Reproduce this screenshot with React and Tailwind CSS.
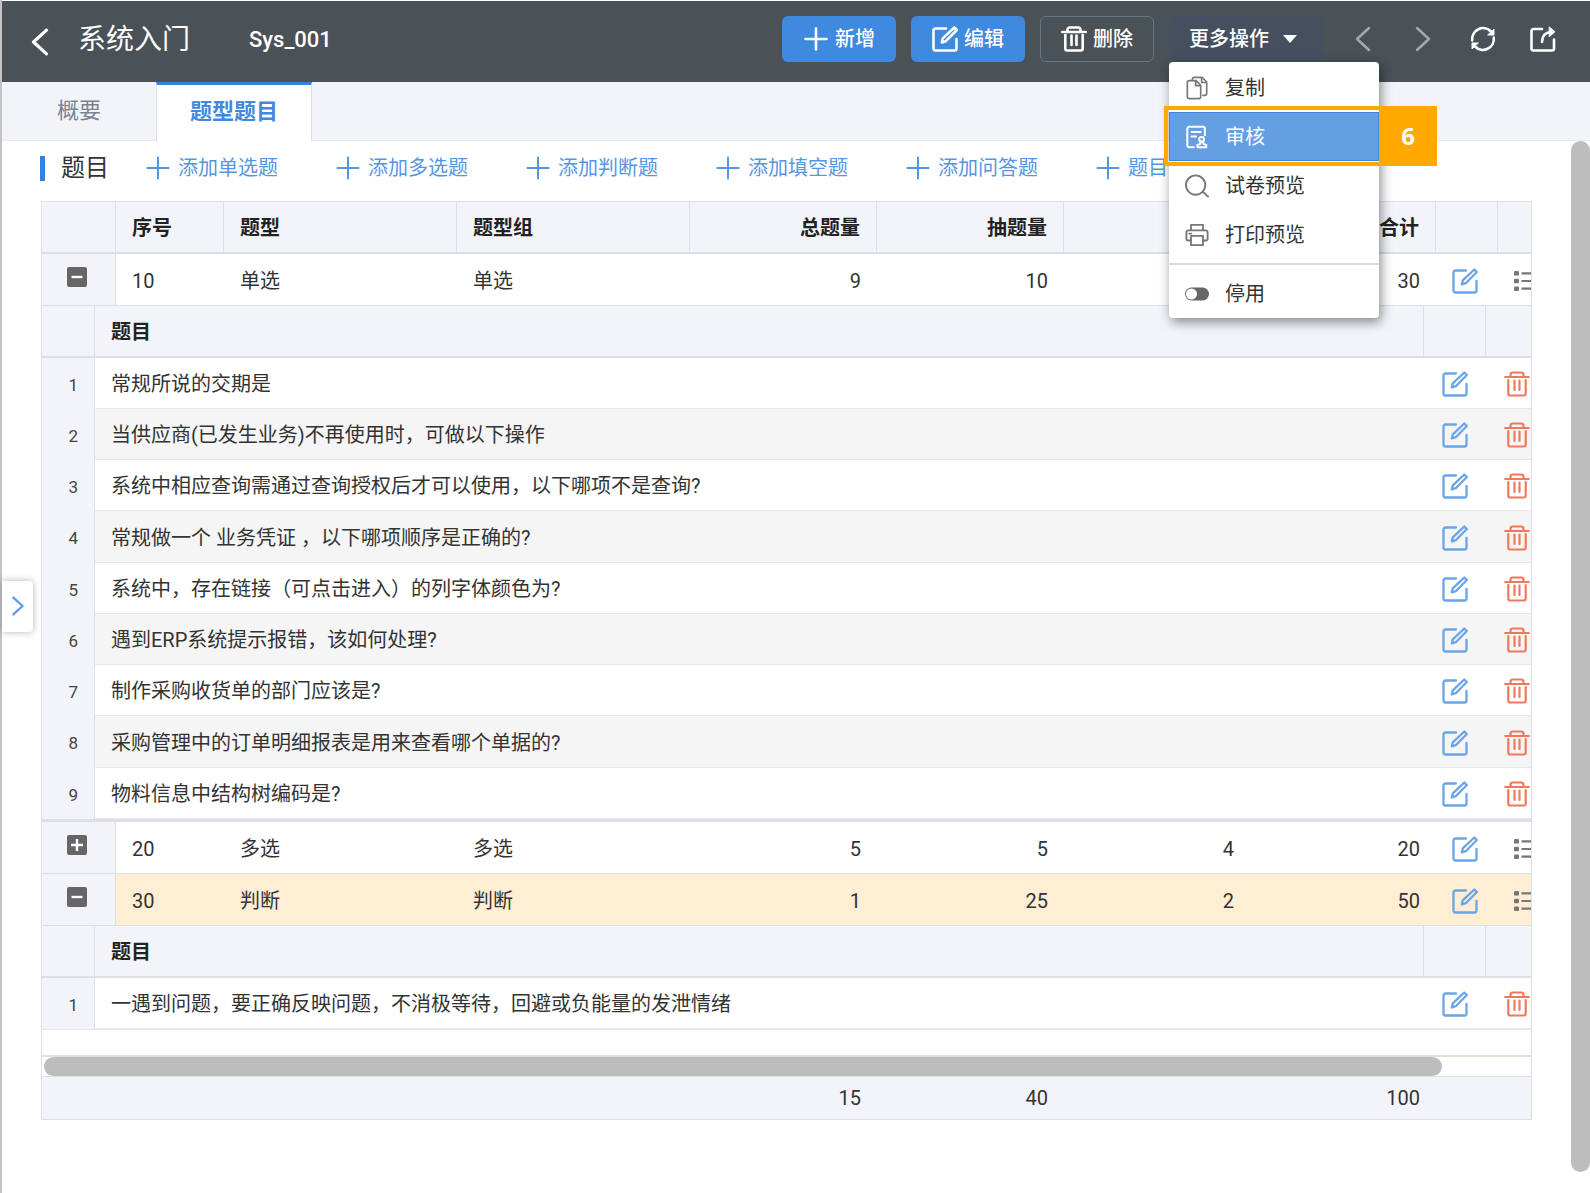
import React, { useState } from "react";

const iconProps = {
  fill: "none",
  stroke: "currentColor",
  strokeLinecap: "round",
  strokeLinejoin: "round",
  "aria-hidden": true,
};

function PlusIcon({ className, width = 2 }) {
  return (
    <svg viewBox="0 0 26 26" className={className} {...iconProps} strokeWidth={width}>
      <path d="M13 2.5v21M2.5 13h21" />
    </svg>
  );
}

function EditIcon({ className, width = 2.3 }) {
  return (
    <svg viewBox="0 0 26 26" className={className} {...iconProps} strokeWidth={width}>
      <path d="M14 2.5H3.5a2 2 0 0 0-2 2v18a2 2 0 0 0 2 2h19a2 2 0 0 0 2-2V13" />
      <path d="M22.3 1.5l2.5 2.5-11 11.2-4 1.2 1-4z" />
    </svg>
  );
}

function TrashIcon({ className, width = 2.2 }) {
  return (
    <svg viewBox="0 0 26 26" className={className} {...iconProps} strokeWidth={width}>
      <path d="M1.2 6h23.6M6.5 5.5V3.7a2.2 2.2 0 0 1 2.2-2.2h8.6a2.2 2.2 0 0 1 2.2 2.2v1.8" />
      <path d="M4.3 9v13.5a2 2 0 0 0 2 2h13.4a2 2 0 0 0 2-2V9M10.5 9.5v9.5M15.5 9.5v9.5" />
    </svg>
  );
}

function ChevronIcon({ className, right, width = 2.5 }) {
  return (
    <svg viewBox="0 0 26 26" className={className} {...iconProps} strokeWidth={width}>
      <path d={right ? "M7 2l12 11L7 24" : "M19 2L7 13l12 11"} />
    </svg>
  );
}

function RefreshIcon({ className }) {
  return (
    <svg viewBox="0 0 26 26" className={className} {...iconProps} strokeWidth="2.6">
      <path d="M2.2 14.5A11 11 0 0 1 21 5.500M23.800 11.500A11 11 0 0 1 5 20.500" />
      <path d="M24 3.500v5.500h-6zM2 22.500V17h6z" fill="currentColor" strokeWidth="1" />
    </svg>
  );
}

function ShareIcon({ className }) {
  return (
    <svg viewBox="0 0 26 26" className={className} {...iconProps} strokeWidth="2.6">
      <path d="M12 3H3.5a2 2 0 0 0-2 2v17.500a2 2 0 0 0 2 2h18.500a2 2 0 0 0 2-2V13.500" />
      <path d="M12 16c0-6 3.500-9.500 9-10" />
      <path d="M19.500 1.200l5.500 4.600-5.500 4.700z" fill="currentColor" strokeWidth="1" />
    </svg>
  );
}

function ListIcon({ className }) {
  return (
    <svg viewBox="0 0 26 26" className={className} fill="currentColor" aria-hidden>
      <rect x="0" y="3" width="5" height="4.600" rx="1.200" />
      <rect x="0" y="10.700" width="5" height="4.600" rx="1.200" />
      <rect x="0" y="18.400" width="5" height="4.600" rx="1.200" />
      <path d="M7.500 4.200H25v2.200H7.500zM7.500 11.900H25v2.200H7.500zM7.500 19.600H25v2.200H7.500z" />
    </svg>
  );
}

function CopyIcon({ className }) {
  return (
    <svg viewBox="0 0 24 26" className={className} {...iconProps} strokeWidth="1.8">
      <path d="M7 5V3.500a2 2 0 0 1 2-2h8.500l5 5V19a2 2 0 0 1-2 2h-2" />
      <path d="M17 2v5h5M3.500 5H11l5 5v12.500a2 2 0 0 1-2 2H3.500a2 2 0 0 1-2-2V7a2 2 0 0 1 2-2zM10.500 5.500v5H15.500" />
    </svg>
  );
}

function AuditIcon({ className }) {
  return (
    <svg viewBox="0 0 24 26" className={className} {...iconProps} strokeWidth="2.2">
      <path d="M8.500 24H3.500a2 2 0 0 1-2-2V4a2 2 0 0 1 2-2h15a2 2 0 0 1 2 2v7M6 7.500h10M6 12.500h5" />
      <circle cx="17" cy="15.500" r="2.600" />
      <path d="M16 18l-.5 2.500-3 1V24h9.500v-2.500l-3-1L18.500 18" />
    </svg>
  );
}

function SearchIcon({ className }) {
  return (
    <svg viewBox="0 0 26 26" className={className} {...iconProps} strokeWidth="2">
      <circle cx="11.500" cy="12" r="10.500" />
      <path d="M19.500 19.500l5.500 5" />
    </svg>
  );
}

function PrinterIcon({ className }) {
  return (
    <svg viewBox="0 0 26 26" className={className} {...iconProps} strokeWidth="2">
      <path d="M6.500 8V2h13v6M6.500 19H3.500a2 2 0 0 1-2-2v-7a2 2 0 0 1 2-2h19a2 2 0 0 1 2 2v7a2 2 0 0 1-2 2h-3M6.500 14h13v10h-13zM4.500 11.500h2.500" />
    </svg>
  );
}

function ToggleIcon({ className }) {
  return (
    <svg viewBox="0 0 26 26" className={className} aria-hidden>
      <rect x="0" y="6" width="26" height="14" rx="7" fill="#666" />
      <circle cx="7" cy="13" r="6" fill="#fff" />
    </svg>
  );
}

const tools = ["添加单选题", "添加多选题", "添加判断题", "添加填空题", "添加问答题", "题目选择"];

const groups = [
  {
    no: 10,
    type: "单选",
    total: 9,
    drawn: 10,
    sum: 30,
    open: true,
    questions: [
      "常规所说的交期是",
      "当供应商(已发生业务)不再使用时，可做以下操作",
      "系统中相应查询需通过查询授权后才可以使用，以下哪项不是查询?",
      "常规做一个 业务凭证 ，以下哪项顺序是正确的?",
      "系统中，存在链接（可点击进入）的列字体颜色为?",
      "遇到ERP系统提示报错，该如何处理?",
      "制作采购收货单的部门应该是?",
      "采购管理中的订单明细报表是用来查看哪个单据的?",
      "物料信息中结构树编码是?",
    ],
  },
  { no: 20, type: "多选", total: 5, drawn: 5, score: 4, sum: 20, open: false, questions: [] },
  {
    no: 30,
    type: "判断",
    total: 1,
    drawn: 25,
    score: 2,
    sum: 50,
    open: true,
    selected: true,
    questions: ["一遇到问题，要正确反映问题，不消极等待，回避或负能量的发泄情绪"],
  },
];

function GridColumns() {
  return (
    <colgroup>
      <col className="w-[74px]" />
      <col className="w-[108px]" />
      <col className="w-[233px]" />
      <col className="w-[233px]" />
      <col className="w-[187px]" />
      <col className="w-[187px]" />
      <col className="w-[186px]" />
      <col className="w-[186px]" />
      <col className="w-[62px]" />
      <col className="w-[62px]" />
      <col className="w-[62px]" />
    </colgroup>
  );
}

function QuestionTable({ questions }) {
  return (
    <table className="w-full table-fixed border-separate border-spacing-0 text-left">
      <colgroup>
        <col className="w-[53px]" />
        <col />
        <col className="w-[62px]" />
        <col className="w-[136px]" />
      </colgroup>
      <thead>
        <tr className="h-[52px] bg-[#f2f4f9]">
          <th className="border-r border-b-2 border-[#dcdfe8]" />
          <th className="border-r border-b-2 border-[#dcdfe8] px-4 pt-0.5 font-bold text-[#222]">题目</th>
          <th className="border-r border-b-2 border-[#dcdfe8]" />
          <th className="border-b-2 border-[#dcdfe8]" />
        </tr>
      </thead>
      <tbody>
        {questions.map((q, i) => (
          <tr key={q} className="h-[51px] bg-white even:bg-[#f5f5f5] nth-[4n]:h-[52px]">
            <td className="border-r border-[#dcdfe8] bg-[#f2f4f9] pt-0.5 pr-4 text-right text-[17px] text-[#444]">
              {i + 1}
            </td>
            <td className="border-b border-[#e8e8e8] px-4 pt-0.5 whitespace-nowrap">{q}</td>
            <td className="border-b border-[#e8e8e8] pt-0.5">
              <button aria-label="编辑题目" className="mx-auto block text-[#6aa5e8]">
                <EditIcon className="size-[26px]" />
              </button>
            </td>
            <td className="border-b border-[#e8e8e8] pt-0.5 pl-[18px]">
              <button aria-label="删除题目" className="block text-[#f0795a]">
                <TrashIcon className="size-[26px]" />
              </button>
            </td>
          </tr>
        ))}
      </tbody>
    </table>
  );
}

function GroupRows({ group, onToggle }) {
  const cell = "border-b border-[#dcdfe8] px-4 pt-0.5";
  return (
    <>
      <tr className={`h-[52px] ${group.selected ? "bg-[#ffeed3]" : "bg-white"}`}>
        <td className="border-r border-b border-[#dcdfe8] bg-[#f2f4f9] pr-1 pb-1.5">
          <button
            aria-label={group.open ? "收起" : "展开"}
            onClick={onToggle}
            className="mx-auto block size-5 rounded-xs bg-[#666] text-white"
          >
            <svg viewBox="0 0 20 20" className="size-5" {...iconProps} strokeWidth="2.4" strokeLinecap="butt">
              <path d={group.open ? "M4.500 10h11" : "M4 10h12M10 4v12"} />
            </svg>
          </button>
        </td>
        <td className={cell}>{group.no}</td>
        <td className={cell}>{group.type}</td>
        <td className={cell}>{group.type}</td>
        <td className={`${cell} text-right`}>{group.total}</td>
        <td className={`${cell} text-right`}>{group.drawn}</td>
        <td className={`${cell} text-right`}>{group.score}</td>
        <td className={`${cell} text-right`}>{group.sum}</td>
        <td className="border-b border-[#dcdfe8] pt-0.5 pr-1">
          <button aria-label="编辑" className="mx-auto block text-[#6aa5e8]">
            <EditIcon className="size-[26px]" />
          </button>
        </td>
        <td className={cell}>
          <button aria-label="明细" className="block text-[#777]">
            <ListIcon className="size-[26px]" />
          </button>
        </td>
        <td className={cell} />
      </tr>
      {group.open && (
        <tr>
          <td colSpan={11} className={group.selected ? "border-b border-[#e8e8e8]" : "border-b-3 border-[#dcdfe8]"}>
            <QuestionTable questions={group.questions} />
          </td>
        </tr>
      )}
    </>
  );
}

function MenuItem({ icon: Icon, label }) {
  return (
    <button role="menuitem" className="flex h-[49px] w-full items-center gap-4 px-4 text-[#333]">
      <Icon className="size-6 text-[#777]" />
      {label}
    </button>
  );
}

function MoreMenu() {
  return (
    <div
      role="menu"
      className="absolute top-full left-0 z-20 w-[210px] rounded-sm bg-white pt-px font-normal shadow-[2px_4px_12px_rgba(0,0,0,0.45)]"
    >
      <MenuItem icon={CopyIcon} label="复制" />
      <div className="relative">
        <button
          role="menuitem"
          className="flex h-[49px] w-full items-center gap-4 border border-[#3d87dc] bg-[#659fe3] px-[15px] text-white"
        >
          <AuditIcon className="size-6" />
          审核
        </button>
        {/* Step marker */}
        <div className="pointer-events-none absolute -top-1.5 right-0 -bottom-[5px] -left-[5px] border-4 border-r-0 border-[#ffa800]" />
        <div className="absolute -top-1.5 -bottom-[5px] left-full flex w-[58px] items-center justify-center bg-[#ffa800] font-['Open_Sans',sans-serif] text-2xl font-bold text-white">
          6
        </div>
      </div>
      <MenuItem icon={SearchIcon} label="试卷预览" />
      <MenuItem icon={PrinterIcon} label="打印预览" />
      <div className="mt-1 border-t-2 border-[#ddd] pt-1">
        <MenuItem icon={ToggleIcon} label="停用" />
      </div>
    </div>
  );
}

function Header() {
  const [menuOpen, setMenuOpen] = useState(true);
  const btn = "flex h-[46px] items-center justify-center rounded-md text-[20px] font-medium text-white";
  return (
    <header className="flex h-[82px] items-start border-t border-white bg-[#4a5157] pt-[15px] pr-[34px] pl-6 text-white">
      <div className="flex h-[46px] items-center pt-0.5">
        <button aria-label="返回">
          <ChevronIcon className="mt-1 size-7" width={3} />
        </button>
        <h1 className="ml-6 text-[28px] leading-none">系统入门</h1>
        <span className="ml-[59px] text-[22px] font-medium">Sys_001</span>
      </div>
      <div className="ml-auto flex items-center gap-[15px]">
        <button className={`${btn} w-[114px] gap-1.5 bg-[#3f89de]`}>
          <PlusIcon className="size-[26px]" width={2.6} />
          新增
        </button>
        <button className={`${btn} w-[114px] gap-1.5 bg-[#3f89de]`}>
          <EditIcon className="size-[26px]" width={2.6} />
          编辑
        </button>
        <button className={`${btn} w-[114px] gap-1.5 border border-[#66778a]`}>
          <TrashIcon className="size-[26px]" width={2.6} />
          删除
        </button>
        <div className="relative text-[20px]">
          <button
            aria-haspopup="menu"
            aria-expanded={menuOpen}
            onClick={() => setMenuOpen(!menuOpen)}
            className={`${btn} w-[154px] justify-start gap-3.5 bg-[#454f5f] pl-5`}
          >
            更多操作
            <svg viewBox="0 0 14 8" className="h-2 w-3.5" fill="currentColor" aria-hidden>
              <path d="M0 0h14L7 8z" />
            </svg>
          </button>
          {menuOpen && <MoreMenu />}
        </div>
        <div className="ml-3 flex items-center gap-[34px]">
          <button aria-label="上一条" className="text-[#a4a8ab]">
            <ChevronIcon className="size-[26px]" />
          </button>
          <button aria-label="下一条" className="text-[#a4a8ab]">
            <ChevronIcon className="size-[26px]" right />
          </button>
          <button aria-label="刷新">
            <RefreshIcon className="size-[26px]" />
          </button>
          <button aria-label="新窗口打开">
            <ShareIcon className="size-[26px]" />
          </button>
        </div>
      </div>
    </header>
  );
}

export default function App() {
  const [rows, setRows] = useState(groups);
  const head = "border-r border-b-2 border-[#dcdfe8] px-4 pt-0.5 font-bold";

  const toggle = (no) => {
    setRows(rows.map((r) => (r.no === no ? { ...r, open: !r.open } : r)));
  };

  return (
    <div className="flex min-h-screen flex-col border-l-2 border-[#c4c4c4] bg-white font-[Roboto,'Noto_Sans_CJK_SC',sans-serif] text-[20px] leading-7 text-[#333]">
      <Header />

      {/* Tabs */}
      <nav role="tablist" className="flex h-[59px] bg-[#f2f4f9] text-[22px]">
        <button
          role="tab"
          aria-selected="false"
          className="w-[154px] border-b border-[#e6e8ee] text-[#7b8494]"
        >
          概要
        </button>
        <button
          role="tab"
          aria-selected="true"
          className="w-[156px] border-x border-t-3 border-x-[#dcdfe8] border-t-[#3382e0] bg-white pb-0.5 font-bold text-[#3f89de]"
        >
          题型题目
        </button>
        <div className="flex-1 border-b border-[#e6e8ee]" />
      </nav>

      <div className="flex flex-1">
        <aside className="flex w-[38px] items-center">
          <button
            aria-label="展开侧栏"
            className="-mt-[122px] flex h-[51px] w-[31px] items-center justify-center rounded-r-sm bg-white text-[#5c9ce6] shadow-[0_0_7px_rgba(0,0,0,0.3)]"
          >
            <ChevronIcon className="h-[22px] w-5" right width={3} />
          </button>
        </aside>

        <main className="min-w-0 flex-1 pr-[39px]">
          {/* Section toolbar */}
          <div className="flex h-[60px] items-center overflow-hidden pb-1.5 whitespace-nowrap">
            <span className="h-[25px] w-[5px] shrink-0 bg-[#3382e0]" />
            <h2 className="ml-4 text-2xl">题目</h2>
            <div className="ml-9 flex gap-[57px]">
              {tools.map((tool) => (
                <button key={tool} className="flex shrink-0 items-center gap-[7px] text-[#5596e3]">
                  <PlusIcon className="size-[26px]" />
                  {tool}
                </button>
              ))}
            </div>
          </div>

          <div className="ml-px overflow-hidden border border-[#dcdfe8]">
            <table className="w-[1580px] table-fixed border-separate border-spacing-0 text-left">
              <GridColumns />
              <thead>
                <tr className="h-[52px] bg-[#f2f4f9] text-[#222]">
                  <th className={head} />
                  <th className={head}>序号</th>
                  <th className={head}>题型</th>
                  <th className={head}>题型组</th>
                  <th className={`${head} text-right`}>总题量</th>
                  <th className={`${head} text-right`}>抽题量</th>
                  <th className={head} />
                  <th className={`${head} text-right`}>合计</th>
                  <th className={head} />
                  <th className={head} />
                  <th className={head} />
                </tr>
              </thead>
              <tbody>
                {rows.map((group) => (
                  <GroupRows key={group.no} group={group} onToggle={() => toggle(group.no)} />
                ))}
              </tbody>
            </table>

            <div className="mt-[25px] border-t-2 border-b border-t-[#e8dfd2] border-b-[#dcdfe8] pl-0.5">
              <div className="h-[19px] w-[94%] rounded-full bg-[#bdbdbd]" />
            </div>

            <table className="w-[1580px] table-fixed bg-[#f2f4f9]">
              <GridColumns />
              <tbody>
                <tr className="h-[42px] text-right">
                  <td colSpan={4} />
                  <td className="px-4">15</td>
                  <td className="px-4">40</td>
                  <td />
                  <td className="px-4">100</td>
                  <td colSpan={3} />
                </tr>
              </tbody>
            </table>
          </div>
        </main>

        <div className="w-[19px] pb-[21px]">
          <div className="h-full rounded-full bg-[#bdbdbd]" />
        </div>
      </div>
    </div>
  );
}
